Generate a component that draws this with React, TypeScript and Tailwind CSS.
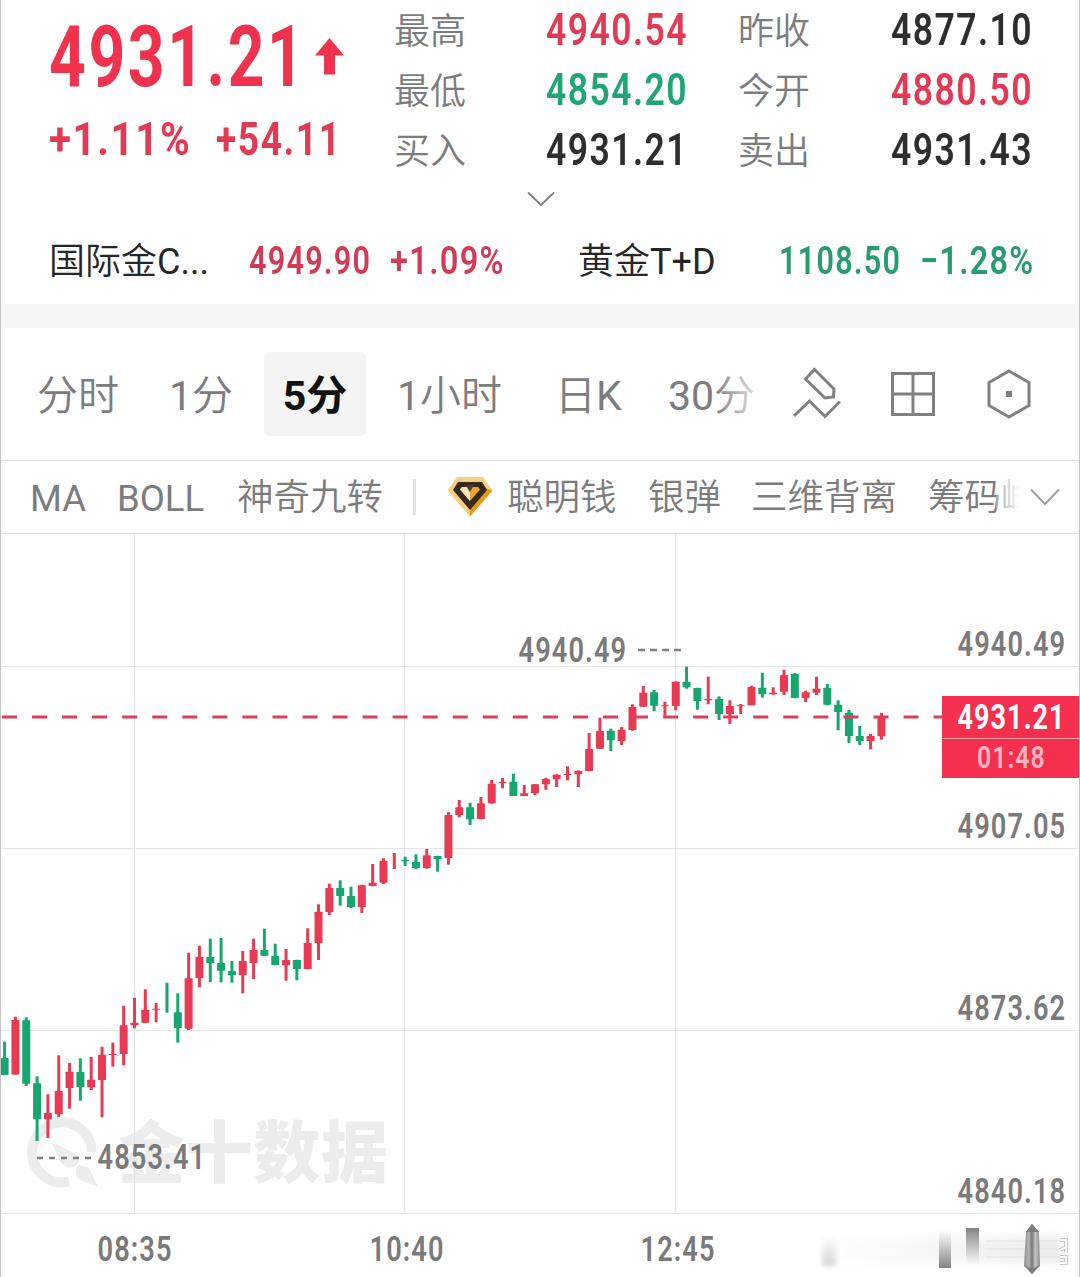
import { clsx } from "clsx"

// [direction, high, low, bodyTop, bodyBottom] in chart coordinates
type Candle = ["u" | "d", number, number, number, number]

const candles: Candle[] = [
  ["d", 1041.7, 1075, 1058, 1075],
  ["u", 1016.7, 1074.7, 1020, 1074.5],
  ["d", 1017.3, 1086, 1020.3, 1083.7],
  ["d", 1076.3, 1141, 1083.3, 1119.3],
  ["u", 1094.3, 1138, 1113, 1119.3],
  ["u", 1055.3, 1117, 1091, 1114.3],
  ["u", 1063, 1108.7, 1071.7, 1088],
  ["d", 1058.3, 1100.7, 1072, 1087],
  ["u", 1057, 1090, 1079.7, 1087.3],
  ["u", 1046.7, 1117.3, 1054.7, 1080],
  ["u", 1042.7, 1066.7, 1054, 1055],
  ["u", 1005.7, 1065.3, 1025.3, 1054],
  ["u", 997.7, 1028.3, 1022.7, 1025.3],
  ["u", 989.3, 1023, 1009.7, 1022.7],
  ["u", 1003, 1022.3, 1008.7, 1009.7],
  ["d", 982.7, 1012.7, 1012, 1012],
  ["d", 993.3, 1042.7, 1012.3, 1028],
  ["u", 952.7, 1030, 978.3, 1028.7],
  ["u", 945.7, 987, 957, 978],
  ["d", 938.7, 982, 957, 963],
  ["d", 938, 982.3, 963, 970.7],
  ["d", 961, 982.7, 971, 975.3],
  ["u", 951, 993.3, 961, 975.3],
  ["u", 938.7, 979, 950, 963],
  ["d", 928.7, 956, 950, 955.7],
  ["d", 943.7, 965.3, 956, 965],
  ["u", 949, 980.7, 960, 965.3],
  ["d", 959.7, 980.3, 960, 969],
  ["u", 928.3, 969.3, 943, 969],
  ["u", 904.3, 960, 911.7, 943],
  ["u", 883.7, 915, 888, 912],
  ["d", 880.3, 905.7, 888, 896],
  ["d", 886.7, 908, 896, 907.3],
  ["u", 884.7, 913, 885.3, 907],
  ["u", 864, 886.3, 882.7, 886],
  ["u", 858.3, 884, 861, 882.7],
  ["u", 853, 869, 861, 861],
  ["d", 856.7, 866, 860, 861.3],
  ["d", 854.3, 869.3, 862, 868],
  ["u", 849, 868.7, 855.3, 868],
  ["d", 855.7, 871.7, 856, 859],
  ["u", 812, 864.7, 815, 858],
  ["u", 800, 817.3, 807.3, 815],
  ["d", 802.7, 825, 807.3, 819.3],
  ["u", 797, 819.3, 803.3, 819],
  ["u", 780, 803.7, 783.7, 803.3],
  ["u", 778, 788.3, 782, 783.3],
  ["d", 773.7, 796, 781.7, 796],
  ["u", 785, 796, 793.3, 796],
  ["u", 784, 795, 784.3, 793.3],
  ["u", 777.7, 789.7, 779, 784.3],
  ["u", 774.3, 787, 774.7, 779.3],
  ["u", 766.3, 780.3, 774, 775],
  ["u", 770.3, 787, 771, 774.3],
  ["u", 733, 771.3, 749, 771],
  ["u", 717.7, 749, 731, 748.7],
  ["d", 728.7, 751, 730.7, 740.3],
  ["u", 727, 745, 729.7, 741],
  ["u", 704.3, 730.7, 707, 730],
  ["u", 686, 707, 692.7, 706.7],
  ["d", 690, 711.3, 692.3, 705.7],
  ["u", 701.7, 715.7, 705.3, 706.3],
  ["u", 681.3, 710.3, 681.7, 706],
  ["d", 666.7, 688.7, 681.7, 687.3],
  ["d", 687.7, 709.7, 688, 701],
  ["u", 676.7, 704.3, 699, 700.3],
  ["d", 696.3, 720, 699, 714],
  ["u", 700.3, 724, 706, 714],
  ["u", 704, 714, 705.3, 706.3],
  ["u", 685.7, 705.3, 687, 705.3],
  ["d", 672.7, 697.7, 687.7, 694.3],
  ["u", 687.3, 694.7, 692.7, 694.3],
  ["u", 669.7, 695, 675, 691.7],
  ["d", 673, 698.3, 674, 698],
  ["u", 690.7, 702, 692.3, 698],
  ["u", 676.7, 695, 688.7, 692.7],
  ["d", 684, 705.3, 687.7, 704.7],
  ["d", 700.3, 730.3, 704.7, 712],
  ["d", 710, 743, 712.7, 736],
  ["d", 726, 745, 736, 741],
  ["u", 734, 749.3, 736, 741],
  ["u", 713, 739.7, 717.3, 736.3],
]

const stats = [
  { label: "最高", value: "4940.54", color: "text-[#e23a55]" },
  { label: "昨收", value: "4877.10", color: "text-[#2e2e2e]" },
  { label: "最低", value: "4854.20", color: "text-[#1fa673]" },
  { label: "今开", value: "4880.50", color: "text-[#e23a55]" },
  { label: "买入", value: "4931.21", color: "text-[#2e2e2e]" },
  { label: "卖出", value: "4931.43", color: "text-[#2e2e2e]" },
]

const periods = [
  { label: "分时", box: "w-[132px]" },
  { num: "1", label: "分", box: "w-[94px]" },
  { num: "5", label: "分", box: "w-[102px]", active: true },
  { num: "1", label: "小时", box: "ml-[31px] w-[158px]" },
  { label: "日", suffix: "K", box: "w-[113px]" },
  { num: "30", label: "分", box: "w-[88px]" },
]

const axisLabels = [
  { text: "4940.49", y: 656 },
  { text: "4907.05", y: 838 },
  { text: "4873.62", y: 1020 },
  { text: "4840.18", y: 1203 },
]

const timeLabels = [
  { text: "08:35", x: 98 },
  { text: "10:40", x: 370 },
  { text: "12:45", x: 641 },
]

function Num({ children, className }: { children: string; className?: string }) {
  return (
    <span className={clsx("inline-block origin-left tracking-[0.04em] whitespace-nowrap", className)}>
      {children}
    </span>
  )
}

function Header() {
  return (
    <header className="h-[304px]">
      <div className="flex h-[180px]">
        <div className="w-[394px] pl-[49px] text-[#f0324f]">
          <div className="flex h-[112px] items-center">
            <div className="w-[266px] pt-[2px]">
              <Num className="w-[266px] scale-x-[0.755] text-[85px] leading-[110px] font-bold">4931.21</Num>
            </div>
            <svg className="shrink-0" width="29" height="37" viewBox="0 0 29 37" fill="currentColor">
              <path d="M14.5 0 29 17.5H20V36.5H9V17.5H0Z" />
            </svg>
          </div>
          <div className="flex h-[54px] items-center text-[46px] font-bold text-[#e23a55]">
            <div className="w-[167px]">
              <Num className="scale-x-[0.875]">+1.11%</Num>
            </div>
            <Num className="scale-x-[0.81]">+54.11</Num>
          </div>
        </div>
        <div className="grid flex-1 grid-cols-[152px_192px_153px_1fr] grid-rows-3">
          {stats.map((s) => (
            <div key={s.label} className="contents">
              <span className="self-center pt-1 text-4xl leading-[56px] font-[350] text-[#7c7c7c]">{s.label}</span>
              <Num className={clsx("self-center scale-x-[0.808] text-[44px] leading-[60px] font-semibold", s.color)}>
                {s.value}
              </Num>
            </div>
          ))}
        </div>
      </div>

      <div className="flex h-[38px] items-center justify-center">
        <svg className="ml-[2px]" width="28" height="16" viewBox="0 0 28 16" fill="none" stroke="#808080" strokeWidth="1.8">
          <path d="M1 1.5 14 14 27 1.5" />
        </svg>
      </div>

      <div className="flex h-[86px] items-center text-[39.5px] font-semibold">
        <span className="w-[249px] pt-px pl-[49px] text-4xl font-[350] text-[#262626]">
          国际金<span className="font-normal">C...</span>
        </span>
        <div className="w-[141px] text-[#d43a55]">
          <Num className="scale-x-[0.775]">4949.90</Num>
        </div>
        <div className="w-[188px] text-[#d43a55]">
          <Num className="scale-x-[0.825]">+1.09%</Num>
        </div>
        <span className="w-[201px] pt-px text-4xl font-[350] text-[#262626]">
          黄金<span className="font-normal">T+D</span>
        </span>
        <div className="w-[141px] text-[#279c6e]">
          <Num className="scale-x-[0.775]">1108.50</Num>
        </div>
        <div className="text-[#279c6e]">
          <Num className="scale-x-[0.82]">−1.28%</Num>
        </div>
      </div>
    </header>
  )
}

function PeriodBar() {
  return (
    <nav className="flex h-[133px] items-center border-b border-[#dedede] text-[41px] font-[350] text-[#7c7c7c]">
      <div className="relative flex w-[757px] items-center overflow-hidden pl-[38px] whitespace-nowrap">
        {periods.map((p, i) => (
          <div
            key={i}
            className={clsx(
              "h-[84px] shrink-0 pt-[2px] leading-[84px]",
              p.box,
              p.active ? "rounded-md bg-[#f4f4f4] text-center font-bold text-[#111]" : "-ml-px mr-px",
            )}
          >
            {p.num && <span className={p.active ? "font-bold" : "font-normal"}>{p.num}</span>}
            {p.label}
            {p.suffix && <span className="font-normal">{p.suffix}</span>}
          </div>
        ))}
        <div className="absolute top-0 right-0 h-full w-[44px] bg-linear-to-r from-white/0 to-white/80" />
      </div>
      <div className="flex items-center text-[#808080]">
        <svg className="ml-[34px]" width="52" height="56" viewBox="0 0 52 56" fill="none" stroke="currentColor" strokeWidth="3">
          <path d="M23.5 3.5 43 23 42.5 31 34 32 14.5 13Z" />
          <path d="M3 50 18.5 35 34 50.5 49 35.5" />
        </svg>
        <svg className="ml-[48px]" width="44" height="44" viewBox="0 0 44 44" fill="none" stroke="currentColor" strokeWidth="3">
          <path d="M1.5 1.5H42.5V42.5H1.5ZM22 1.5V42.5M1.5 22H42.5" />
        </svg>
        <svg className="ml-[52px]" width="44" height="50" viewBox="0 0 44 50" fill="none" stroke="currentColor" strokeWidth="3">
          <path d="M22 2 42 13.5V36.5L22 48 2 36.5V13.5Z" />
          <rect x="19" y="22" width="6" height="6" fill="currentColor" stroke="none" />
        </svg>
      </div>
    </nav>
  )
}

function DiamondIcon() {
  return (
    <svg width="46" height="42" viewBox="0 0 46 42">
      <path d="M10 1H36L45.5 14.5 23 40.5 .5 14.5Z" fill="#f5cf82" />
      <path d="M45.5 14.5 23 40.5V31L38 12Z" fill="#e59a17" />
      <path d="M11 6H35L40 14 23 34 6 14Z" fill="#362a1c" />
      <path d="M15 11H31L33 13.5 23 25 13 13.5Z" fill="#efa52b" />
      <path d="M15 11H19L23 17V25L13 13.5Z" fill="#fbe7c3" />
      <path d="M19 9H27L23 16Z" fill="#3a3c4c" />
    </svg>
  )
}

function IndicatorBar() {
  return (
    <div className="flex h-[73px] items-center border-b border-[#e0e0e0] text-[36.5px] font-[350] whitespace-nowrap text-[#7c7c7c]">
      <span className="w-[87px] shrink-0 pt-[4px] pl-[30px] font-normal">MA</span>
      <span className="ml-[30px] w-[120px] shrink-0 pt-[4px] font-normal">BOLL</span>
      <span className="w-[176px] shrink-0 pt-[3px]">神奇九转</span>
      <span className="h-9 w-[3px] shrink-0 bg-[#e2e2e2]" />
      <span className="ml-[31px] w-[60px] shrink-0">
        <DiamondIcon />
      </span>
      <span className="w-[141px] shrink-0 pt-[3px]">聪明钱</span>
      <span className="w-[103px] shrink-0 pt-[3px]">银弹</span>
      <span className="w-[177px] shrink-0 pt-[3px]">三维背离</span>
      <div className="relative w-[92px] shrink-0 overflow-hidden pt-[3px]">
        筹码峰
        <div className="absolute top-0 right-0 h-full w-6 bg-linear-to-r from-white/30 to-white" />
      </div>
      <svg className="ml-[10px] shrink-0" width="30" height="18" viewBox="0 0 30 18" fill="none" stroke="#a0a0a0" strokeWidth="2">
        <path d="M1 1.5 15 16 29 1.5" />
      </svg>
    </div>
  )
}

function Watermark() {
  return (
    <g fill="#ececec">
      <path d="M69 1181.5A30 30 0 1 1 92 1152" fill="none" stroke="#ececec" strokeWidth="10" />
      <path d="M52 1142 76 1154C83 1160 76 1170 67 1167 60 1164 57 1155 52 1142Z" />
      <path d="M79 1165 89 1168 98 1187 80 1180C74 1175 75 1168 79 1165Z" />
      <text x="118" y="1177" fontSize="67" fontWeight="900" textLength="270">
        金十数据
      </text>
    </g>
  )
}

type ChartTextProps = {
  x: number
  y: number
  children: string
  size?: number
  fill?: string
  weight?: number
  condense?: number
}

function ChartText({ x, y, children, size = 35, fill = "#7a7a7a", weight = 600, condense = 0.778 }: ChartTextProps) {
  return (
    <text
      transform={`translate(${x} ${y}) scale(${condense} 1)`}
      fontSize={size}
      fontWeight={weight}
      fill={fill}
      letterSpacing="0.04em"
    >
      {children}
    </text>
  )
}

function Chart() {
  return (
    <svg className="block" width="1080" height="743" viewBox="0 534 1080 743">
      <defs>
        <linearGradient id="fadeUp" x1="0" y1="1" x2="0" y2="0">
          <stop offset="0" stopColor="#858585" />
          <stop offset="1" stopColor="#fff" />
        </linearGradient>
        <linearGradient id="fadeDown" x1="0" y1="0" x2="0" y2="1">
          <stop offset="0" stopColor="#858585" />
          <stop offset="1" stopColor="#fafafa" />
        </linearGradient>
        <linearGradient id="smear" x1="0" x2="1">
          <stop offset="0" stopColor="#fff" />
          <stop offset=".4" stopColor="#f8f8f8" />
          <stop offset=".8" stopColor="#f0f0f0" />
          <stop offset="1" stopColor="#ebebeb" />
        </linearGradient>
        <linearGradient id="pin" x1="0" x2="1">
          <stop offset="0" stopColor="#8c8c8c" />
          <stop offset=".3" stopColor="#b4b4b4" />
          <stop offset=".5" stopColor="#777" />
          <stop offset=".7" stopColor="#c4c4c4" />
          <stop offset="1" stopColor="#8c8c8c" />
        </linearGradient>
        <filter id="soft" x="-50%" y="-30%" width="200%" height="160%">
          <feGaussianBlur stdDeviation="2.5" />
        </filter>
        <filter id="softer" x="-20%" y="-40%" width="140%" height="180%">
          <feGaussianBlur stdDeviation="5" />
        </filter>
      </defs>

      <Watermark />

      <g stroke="#e4e4e4" strokeWidth="1">
        {[134.5, 404.5, 675.5].map((x) => (
          <line key={x} x1={x} x2={x} y1="534" y2="1213" />
        ))}
        {[666.5, 848.5, 1030.5, 1213.5].map((y) => (
          <line key={y} x1="0" x2="1080" y1={y} y2={y} />
        ))}
      </g>

      {candles.map(([dir, high, low, top, bottom], i) => {
        const x = 4.6 + i * 10.825
        return (
          <g key={i} fill={dir === "u" ? "#e93a54" : "#16a670"}>
            <rect x={x - 1.5} y={high} width="3" height={low - high} />
            {bottom > top && <rect x={x - 4} y={top} width="8" height={bottom - top} rx="0.6" />}
          </g>
        )
      })}

      <line x1="2" x2="942" y1="717" y2="717" stroke="#dc3f57" strokeWidth="2.8" strokeDasharray="15 15.05" />

      <line x1="638" x2="682" y1="650" y2="650" stroke="#808080" strokeWidth="2.5" strokeDasharray="7 5" />
      <ChartText x={518.5} y={662}>4940.49</ChartText>
      <line x1="37" x2="92" y1="1158" y2="1158" stroke="#808080" strokeWidth="2.5" strokeDasharray="6 6" />
      <ChartText x={97.5} y={1169}>4853.41</ChartText>
      {axisLabels.map((l) => (
        <ChartText key={l.text} x={957.5} y={l.y}>{l.text}</ChartText>
      ))}
      {timeLabels.map((l) => (
        <ChartText key={l.text} x={l.x - 0.5} y={1260.5}>{l.text}</ChartText>
      ))}

      <rect x="942" y="696" width="138" height="82" fill="#f5304f" />
      <line x1="942" x2="1080" y1="738.5" y2="738.5" stroke="#fba5b2" />
      <ChartText x={957.5} y={729} fill="#fff" weight={700} condense={0.77}>4931.21</ChartText>
      <ChartText x={977} y={768} size={31} fill="#fcb4bf" condense={0.805}>01:48</ChartText>

      {/* smudged corner */}
      <g>
        <rect x="812" y="1237" width="250" height="26" fill="url(#smear)" filter="url(#softer)" />
        <rect x="822" y="1236" width="14" height="30" fill="url(#fadeUp)" opacity=".35" filter="url(#soft)" />
        <rect x="939" y="1230" width="12" height="38" fill="url(#fadeUp)" />
        <rect x="966" y="1228" width="13" height="36" fill="url(#fadeDown)" />
        <path d="M985 1241H1060M985 1249H1060M985 1257H1060" stroke="#dcdcdc" strokeWidth="1.5" opacity=".5" />
        <path d="M1032 1224 1039 1232 1040 1266 1032 1274 1024 1266 1026 1232Z" fill="url(#pin)" />
        <path d="M1032 1224 1039 1232H1026ZM1024 1265 1032 1269 1040 1265 1032 1274Z" fill="#7c7c7c" />
        <path
          d="M1060 1240H1066V1246M1060 1250 1066 1247V1253M1060 1257H1066V1263H1060"
          fill="none"
          stroke="#b5b5b5"
          strokeWidth="3.5"
        />
        <path
          d="M1060 1240H1066V1246M1060 1250 1066 1247V1253M1060 1257H1066V1263H1060"
          fill="none"
          stroke="#fff"
          strokeWidth="2"
        />
      </g>
    </svg>
  )
}

export default function App() {
  return (
    <div className="relative h-[1277px] w-[1080px] overflow-hidden bg-white font-['Roboto','Noto_Sans_CJK_SC',sans-serif]">
      <Header />
      <div className="h-6 bg-[#f5f5f5]" />
      <PeriodBar />
      <IndicatorBar />
      <Chart />
      <div className="pointer-events-none absolute inset-0 border-x border-[#c4c4c4]" />
    </div>
  )
}
